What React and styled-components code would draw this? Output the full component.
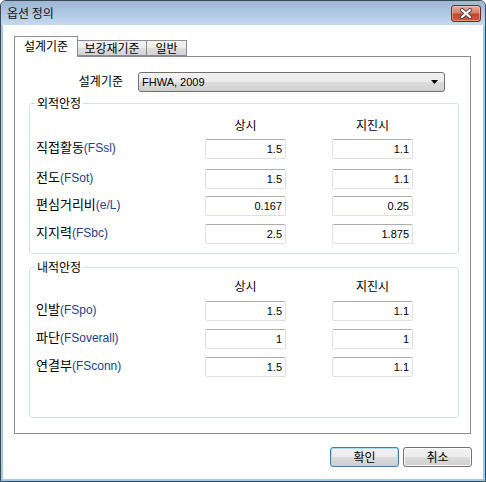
import React from 'react'
import styled, { createGlobalStyle } from 'styled-components'

const GlobalStyle = createGlobalStyle`
  html, body {
    margin: 0;
    padding: 0;
    background: #ffffff;
  }
  body {
    font-family: "Noto Sans CJK KR", sans-serif;
    color: #000;
  }
`

const Window = styled.div`
  width: 486px;
  height: 482px;
  box-sizing: border-box;
  border: 1px solid #3d4854;
  border-radius: 6px 6px 0 0;
  overflow: hidden;
  display: flex;
  flex-direction: column;
  background: #c4d8ee;
`

const TitleBar = styled.div`
  height: 24px;
  flex: none;
  display: flex;
  align-items: flex-start;
  padding: 0 4px 0 6px;
  background: linear-gradient(180deg, #9cb6d4 0%, #b3cbe5 60%, #c6d9ee 100%);
`

const Title = styled.div`
  flex: 1;
  font-size: 12px;
  line-height: 24px;
  color: #111;
`

const CloseButton = styled.div`
  margin-top: 4px;
  width: 30px;
  height: 17px;
  box-sizing: border-box;
  border: 1px solid #6e2a24;
  border-radius: 3px;
  background: linear-gradient(180deg, #e9ab9d 0%, #d9806d 45%, #c4462f 55%, #cd5a3f 100%);
  box-shadow: inset 0 0 0 1px rgba(255, 220, 210, 0.45);
  display: flex;
  align-items: center;
  justify-content: center;
`

const Client = styled.div`
  flex: 1;
  display: flex;
  flex-direction: column;
  background: #ffffff;
  border: 2px solid #9fcbe8;
  border-top: none;
  padding: 11px 12px 0 11px;
`

const TabStrip = styled.div`
  height: 20px;
  display: flex;
  align-items: flex-end;
`

const Tab = styled.div`
  position: relative;
  box-sizing: border-box;
  height: ${p => (p.$active ? '21px' : '16px')};
  margin-bottom: ${p => (p.$active ? '-1px' : '0')};
  margin-left: ${p => (p.$first ? '0' : '-1px')};
  width: ${p => p.$w}px;
  border: 1px solid #898c95;
  border-bottom: ${p => (p.$active ? 'none' : '1px solid #898c95')};
  background: ${p =>
    p.$active ? '#ffffff' : 'linear-gradient(180deg, #f3f3f3 0%, #ebebeb 50%, #dedede 51%, #d3d3d3 100%)'};
  z-index: ${p => (p.$active ? 2 : 1)};
  font-size: 12px;
  line-height: ${p => (p.$active ? '17px' : '14px')};
  text-align: center;
  color: #000;
`

const Panel = styled.div`
  height: 378px;
  box-sizing: border-box;
  border: 1px solid #898c95;
  padding-top: 15px;
  display: flex;
  flex-direction: column;
`

const SelectRow = styled.div`
  display: flex;
  align-items: center;
  height: 20px;
`

const SelectLabel = styled.div`
  width: 108px;
  margin-right: 15px;
  text-align: right;
  font-size: 12px;
  line-height: 16px;
  padding-bottom: 2px;
`

const ComboBox = styled.div`
  width: 307px;
  height: 20px;
  box-sizing: border-box;
  border: 1px solid #707070;
  border-radius: 3px;
  background: linear-gradient(180deg, #f2f2f2 0%, #ebebeb 50%, #dddddd 51%, #cfcfcf 100%);
  display: flex;
  align-items: center;
  padding: 0 6px 0 3px;
  font-family: "Liberation Sans", sans-serif;
  font-size: 11px;
  color: #000;
`

const ComboText = styled.span`
  flex: 1;
`

const Group = styled.fieldset`
  margin: ${p => p.$top}px 0 0 14px;
  width: 430px;
  height: 159px;
  box-sizing: border-box;
  min-width: 0;
  border: 1px solid #d5dfe5;
  border-radius: 3px;
  padding: 0 6px;
`

const Legend = styled.legend`
  padding: 0 2px;
  margin-left: -1px;
  font-size: 12px;
  line-height: 16px;
`

const Grid = styled.div`
  display: grid;
  grid-template-columns: 123px 81px 81px;
  column-gap: 46px;
  margin-top: ${p => p.$top}px;
  height: ${p => p.$h}px;
`

const Header = styled.div`
  font-size: 12px;
  line-height: 16px;
  text-align: center;
`

const Label = styled.div`
  font-size: 13px;
  line-height: 16px;
  align-self: start;
  white-space: nowrap;
`

const Code = styled.span`
  font-family: "Liberation Sans", sans-serif;
  font-size: 12px;
  color: #24418f;
`

const Field = styled.input`
  width: 81px;
  height: 20px;
  box-sizing: border-box;
  margin: 0;
  border: 1px solid #dde1e7;
  border-top-color: #abadb3;
  border-radius: 2px;
  padding: 0 3px 0 2px;
  text-align: right;
  font-family: "Liberation Sans", sans-serif;
  font-size: 11px;
  color: #000;
  background: #ffffff;
  outline: none;
`

const ButtonBar = styled.div`
  display: flex;
  justify-content: flex-end;
  gap: 4px;
  margin-top: 13px;
  margin-right: -1px;
`

const Button = styled.button`
  width: 69px;
  height: 20px;
  box-sizing: border-box;
  margin: 0;
  padding: 0;
  border: 1px solid ${p => (p.$default ? '#3c7fb1' : '#707070')};
  border-radius: 3px;
  box-shadow: ${p => (p.$default ? 'inset 0 0 0 1px #a9dcf5' : 'inset 0 0 0 1px #fbfbfb')};
  background: linear-gradient(180deg, #f2f2f2 0%, #ebebeb 50%, #dddddd 51%, #cfcfcf 100%);
  font-family: "Noto Sans CJK KR", sans-serif;
  font-size: 12px;
  line-height: 16px;
  color: #000;
`

const outer = [
  { ko: '직접활동', code: '(FSsl)', a: '1.5', b: '1.1', gap: 6 },
  { ko: '전도', code: '(FSot)', a: '1.5', b: '1.1', gap: 10 },
  { ko: '편심거리비', code: '(e/L)', a: '0.167', b: '0.25', gap: 7 },
  { ko: '지지력', code: '(FSbc)', a: '2.5', b: '1.875', gap: 8 },
]

const inner = [
  { ko: '인발', code: '(FSpo)', a: '1.5', b: '1.1', gap: 7 },
  { ko: '파단', code: '(FSoverall)', a: '1', b: '1', gap: 8 },
  { ko: '연결부', code: '(FSconn)', a: '1.5', b: '1.1', gap: 8 },
]

function CloseIcon() {
  return (
    <svg width="14" height="11" viewBox="0 0 14 11">
      <path d="M3 2 L11 9 M11 2 L3 9" stroke="#4a4a4a" strokeWidth="4" strokeLinecap="round" fill="none" />
      <path d="M3 2 L11 9 M11 2 L3 9" stroke="#ffffff" strokeWidth="2.2" strokeLinecap="round" fill="none" />
    </svg>
  )
}

function SafetyGroup({ title, rows, top, headerTop }) {
  return (
    <Group $top={top}>
      <Legend>{title}</Legend>
      <Grid $top={headerTop} $h={16}>
        <div />
        <Header>상시</Header>
        <Header>지진시</Header>
      </Grid>
      {rows.map(r => (
        <Grid key={r.code} $top={r.gap} $h={20}>
          <Label>
            {r.ko}
            <Code>{r.code}</Code>
          </Label>
          <Field defaultValue={r.a} readOnly />
          <Field defaultValue={r.b} readOnly />
        </Grid>
      ))}
    </Group>
  )
}

export default function App() {
  return (
    <>
      <GlobalStyle />
      <Window>
        <TitleBar>
          <Title>옵션 정의</Title>
          <CloseButton>
            <CloseIcon />
          </CloseButton>
        </TitleBar>
        <Client>
          <TabStrip>
            <Tab $active $first $w={64}>설계기준</Tab>
            <Tab $w={70}>보강재기준</Tab>
            <Tab $w={41}>일반</Tab>
          </TabStrip>
          <Panel>
            <SelectRow>
              <SelectLabel>설계기준</SelectLabel>
              <ComboBox>
                <ComboText>FHWA, 2009</ComboText>
                <svg width="7" height="4" viewBox="0 0 7 4">
                  <path d="M0 0 H7 L3.5 4 Z" fill="#000" />
                </svg>
              </ComboBox>
            </SelectRow>
            <SafetyGroup title="외적안정" rows={outer} top={3} headerTop={6} />
            <SafetyGroup title="내적안정" rows={inner} top={5} headerTop={3} />
          </Panel>
          <ButtonBar>
            <Button $default>확인</Button>
            <Button>취소</Button>
          </ButtonBar>
        </Client>
      </Window>
    </>
  )
}
